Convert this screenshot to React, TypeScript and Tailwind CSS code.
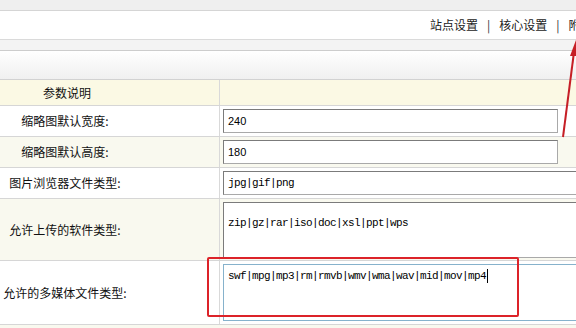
import type { ReactNode } from "react";

const cjk = '"Noto Sans CJK SC", "Liberation Sans", sans-serif';
const mono = '"Liberation Mono", "Noto Sans CJK SC", monospace';

interface RowProps {
  label: string;
  height: string;
  tint?: boolean;
  children: ReactNode;
}

function Row({ label, height, tint, children }: RowProps) {
  return (
    <div
      className={`flex border-b border-[#d6d6d6] ${height} ${
        tint ? "bg-[#f9f9ef]" : "bg-white"
      }`}
    >
      <div className="flex w-[220px] shrink-0 items-center justify-center border-r border-[#d9d9d9] pr-[89px] text-[12px] text-[#111]">
        <span className="whitespace-nowrap">{label}</span>
      </div>
      <div className="flex-1 pl-[3px] pt-[3px]">{children}</div>
    </div>
  );
}

function Field({ value, wide }: { value: string; wide?: boolean }) {
  return (
    <div
      className={`flex h-[24px] items-center border border-[#a9a9a9] border-l-[#7b7b7b] border-t-[#7b7b7b] bg-white pl-[4px] ${
        wide ? "w-[400px]" : "w-[335px]"
      }`}
    >
      {wide ? (
        <span
          className="text-[11px] tracking-[-0.6px] text-black"
          style={{ fontFamily: mono }}
        >
          {value}
        </span>
      ) : (
        <span className="font-['Liberation_Sans'] text-[11px] text-black">
          {value}
        </span>
      )}
    </div>
  );
}

export default function App() {
  return (
    <div
      className="relative h-[328px] w-[576px] overflow-hidden bg-white"
      style={{ fontFamily: cjk }}
    >
      {/* top chrome */}
      <div className="h-[11px] border-b border-[#d5d5d5] bg-[#efefef]" />
      <div className="flex h-[29px] items-center border-b border-[#dadada] bg-white pl-[430px] text-[12px] text-[#222] whitespace-nowrap">
        <span>站点设置</span>
        <span className="mx-[9px] text-[#333]">|</span>
        <span>核心设置</span>
        <span className="mx-[9px] text-[#333]">|</span>
        <span>附件</span>
      </div>
      <div className="h-[11px] border-b border-[#cdcdcd] bg-[#f3f3f3]" />
      <div className="h-[29px] border-b border-[#d2d2d2] bg-gradient-to-b from-white to-[#f0f0f0]" />

      {/* table header */}
      <div className="flex h-[26px] border-b border-[#d6d6d6] bg-[#fbf9e4]">
        <div className="flex w-[220px] items-center justify-center border-r border-[#d9d9d9] pr-[85px] text-[12px] text-[#111]">
          参数说明
        </div>
        <div className="flex-1" />
      </div>

      <Row label="缩略图默认宽度:" height="h-[31px]">
        <Field value="240" />
      </Row>
      <Row label="缩略图默认高度:" height="h-[31px]" tint>
        <Field value="180" />
      </Row>
      <Row label="图片浏览器文件类型:" height="h-[31px]">
        <Field value="jpg|gif|png" wide />
      </Row>
      <Row label="允许上传的软件类型:" height="h-[62px]" tint>
        <div className="h-[56px] w-[400px] border border-[#a9a9a9] border-l-[#7b7b7b] border-t-[#7b7b7b] bg-white pl-[4px] pt-[4px]">
          <span
            className="text-[11px] leading-[14px] tracking-[-0.6px] text-black"
            style={{ fontFamily: mono }}
          >
            zip|gz|rar|iso|doc|xsl|ppt|wps
          </span>
        </div>
      </Row>
      <Row label="允许的多媒体文件类型:" height="h-[64px]">
        <div className="h-[57px] w-[400px] border border-[#86b2cc] bg-white pl-[4px] pt-[4px]">
          <div className="flex items-center">
            <span
              className="text-[11px] leading-[14px] tracking-[-0.6px] text-black"
              style={{ fontFamily: mono }}
            >
              swf|mpg|mp3|rm|rmvb|wmv|wma|wav|mid|mov|mp4
            </span>
            <span className="ml-[1px] h-[14px] w-px bg-black" />
          </div>
        </div>
      </Row>
      <div className="h-[20px] bg-[#f9f9ef]" />

      {/* annotations */}
      <div className="absolute left-[207px] top-[257px] h-[60px] w-[312px] rounded-[2px] border-2 border-[#dc2329]" />
      <svg
        className="absolute left-[550px] top-[36px]"
        width="26"
        height="104"
        viewBox="0 0 26 104"
      >
        <line x1="24" y1="16" x2="13" y2="101" stroke="#c61f26" strokeWidth="2" />
        <polygon points="26,4 20,20 28,20" fill="#c61f26" />
      </svg>
    </div>
  );
}
